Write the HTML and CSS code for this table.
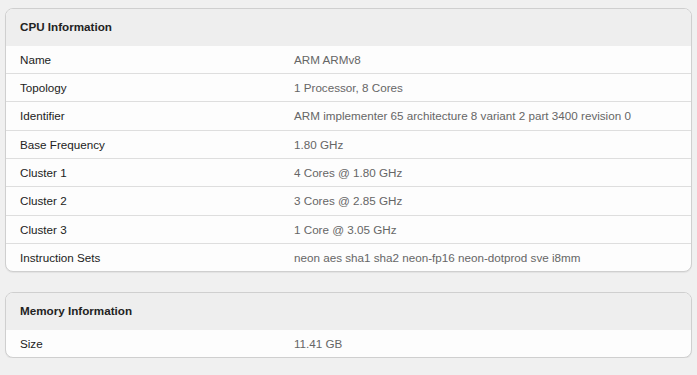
FILE: index.html
```html
<!DOCTYPE html>
<html>
<head>
<meta charset="utf-8">
<link rel="stylesheet" href="styles.css">
</head>
<body>
<div class="page">
  <section class="card">
    <div class="card-head">CPU Information</div>
    <table class="info">
      <colgroup><col class="c-label"><col></colgroup>
      <tr><td class="label">Name</td><td class="value">ARM ARMv8</td></tr>
      <tr><td class="label">Topology</td><td class="value">1 Processor, 8 Cores</td></tr>
      <tr><td class="label">Identifier</td><td class="value">ARM implementer 65 architecture 8 variant 2 part 3400 revision 0</td></tr>
      <tr><td class="label">Base Frequency</td><td class="value">1.80 GHz</td></tr>
      <tr><td class="label">Cluster 1</td><td class="value">4 Cores @ 1.80 GHz</td></tr>
      <tr><td class="label">Cluster 2</td><td class="value">3 Cores @ 2.85 GHz</td></tr>
      <tr><td class="label">Cluster 3</td><td class="value">1 Core @ 3.05 GHz</td></tr>
      <tr><td class="label">Instruction Sets</td><td class="value">neon aes sha1 sha2 neon-fp16 neon-dotprod sve i8mm</td></tr>
    </table>
  </section>
  <section class="card">
    <div class="card-head">Memory Information</div>
    <table class="info">
      <colgroup><col class="c-label"><col></colgroup>
      <tr><td class="label">Size</td><td class="value">11.41 GB</td></tr>
    </table>
  </section>
</div>
</body>
</html>
```

FILE: styles.css
```css
html, body {
  margin: 0;
  padding: 0;
  background: #f0f0f0;
}
body {
  font-family: "Liberation Sans", Arial, sans-serif;
  font-size: 11.67px;
  color: #222;
}
.page {
  padding: 8px 5px 0 5px;
  display: flex;
  flex-direction: column;
  gap: 20px;
}
.card {
  border: 1px solid #cfcfcf;
  border-radius: 8px;
  background: #fdfdfd;
  overflow: hidden;
  box-shadow: 0 1px 1px rgba(0,0,0,0.06);
}
.card-head {
  background: #eeeeee;
  font-weight: bold;
  color: #222;
  padding: 0 14px;
  height: 36.67px;
  line-height: 36.67px;
}
.info {
  width: 100%;
  border-collapse: collapse;
  table-layout: fixed;
}
.c-label {
  width: 40%;
}
.info td {
  height: 27.33px;
  padding: 0 14px;
  line-height: 13.33px;
  vertical-align: middle;
}
.info tr + tr td {
  border-top: 1px solid #dedede;
}
.label {
  color: #222;
}
.value {
  color: #666;
}
```
